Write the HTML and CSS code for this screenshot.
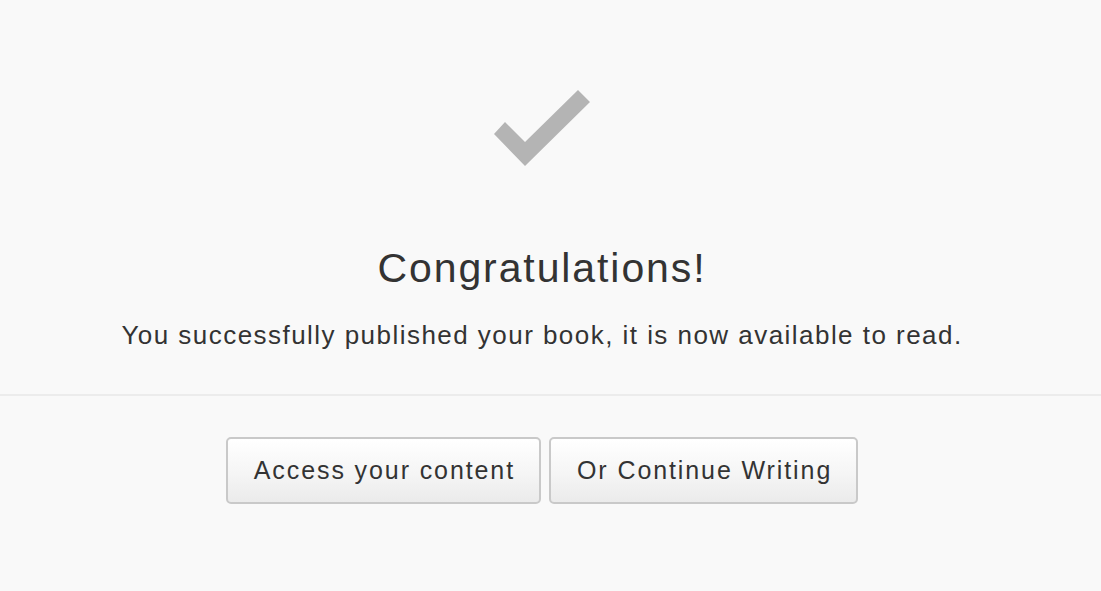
FILE: index.html
```html
<!DOCTYPE html>
<html lang="en">
<head>
<meta charset="utf-8">
<title>Published</title>
<link rel="stylesheet" href="styles.css">
</head>
<body>
<main class="page">
  <section class="hero">
    <svg class="check" width="97" height="77" viewBox="0 0 97 77" aria-hidden="true">
      <polygon points="0,44 11,32 31,52 84,0 96,12 31,76" fill="#b4b4b4"/>
    </svg>
    <h1 class="title">Congratulations!</h1>
    <p class="lead">You successfully published your book, it is now available to read.</p>
  </section>
  <hr class="divider">
  <div class="actions">
    <button class="btn btn-first" type="button">Access your content</button>
    <button class="btn" type="button">Or Continue Writing</button>
  </div>
</main>
</body>
</html>
```
FILE: styles.css
```css
html, body {
  margin: 0;
  padding: 0;
  background: #f9f9f9;
  height: 100%;
}
body {
  font-family: "Liberation Sans", Arial, Helvetica, sans-serif;
  color: #333333;
  overflow: hidden;
}
.page {
  display: flex;
  flex-direction: column;
  align-items: stretch;
}
.hero {
  display: flex;
  flex-direction: column;
  align-items: center;
  padding-top: 90px;
  padding-right: 17px;
}
.check {
  display: block;
  margin-left: 1px;
}
.title {
  margin: 81px 0 0 0;
  font-size: 41px;
  line-height: 41px;
  font-weight: normal;
  letter-spacing: 1.9px;
  color: #333333;
}
.lead {
  margin: 33px 0 0 0;
  font-size: 26px;
  line-height: 26px;
  letter-spacing: 1.46px;
  color: #333333;
}
.divider {
  margin: 46px 0 0 0;
  border: 0;
  height: 2px;
  background: #ececec;
}
.actions {
  display: flex;
  justify-content: center;
  gap: 8px;
  margin-top: 41px;
  padding-right: 17px;
}
.btn {
  height: 67px;
  padding: 0 24px 0 26px;
  font-family: "Liberation Sans", Arial, Helvetica, sans-serif;
  font-size: 25px;
  letter-spacing: 1.9px;
  color: #333333;
  background: linear-gradient(to bottom, #ffffff 0%, #f5f5f5 55%, #ebebeb 100%);
  border: 2px solid #c9c9c9;
  border-radius: 5px;
  cursor: pointer;
}
```
